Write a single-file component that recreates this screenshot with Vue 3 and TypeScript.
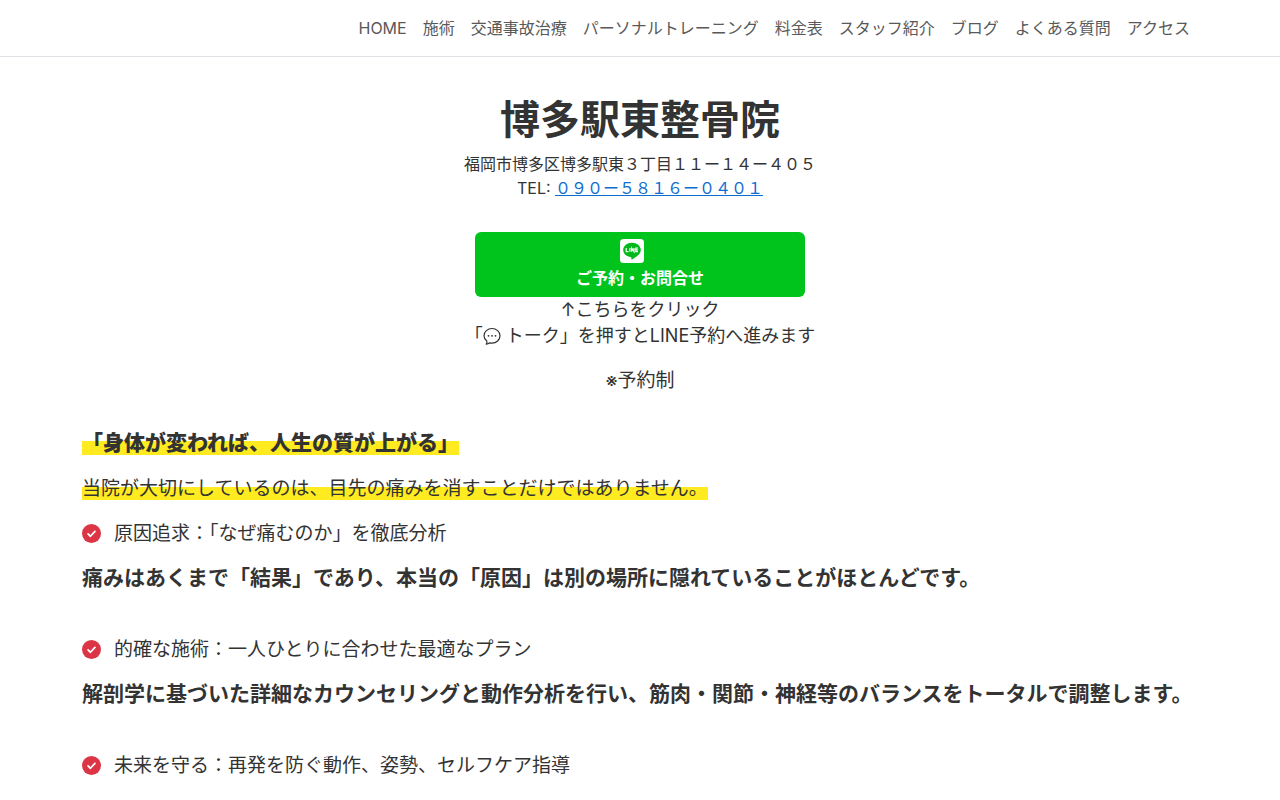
<script setup lang="ts">
interface Point {
  title: string
  detail: string
}

const navItems: string[] = [
  'HOME',
  '施術',
  '交通事故治療',
  'パーソナルトレーニング',
  '料金表',
  'スタッフ紹介',
  'ブログ',
  'よくある質問',
  'アクセス',
]

const points: Point[] = [
  {
    title: '原因追求：「なぜ痛むのか」を徹底分析',
    detail: '痛みはあくまで「結果」であり、本当の「原因」は別の場所に隠れていることがほとんどです。',
  },
  {
    title: '的確な施術：一人ひとりに合わせた最適なプラン',
    detail:
      '解剖学に基づいた詳細なカウンセリングと動作分析を行い、筋肉・関節・神経等のバランスをトータルで調整します。',
  },
  {
    title: '未来を守る：再発を防ぐ動作、姿勢、セルフケア指導',
    detail: '',
  },
]
</script>

<template>
  <div class="page" lang="ja">
    <header class="site-header">
      <nav class="container nav">
        <a v-for="item in navItems" :key="item" href="#" class="nav-link">{{ item }}</a>
      </nav>
    </header>

    <main class="container main">
      <section class="intro">
        <h1 class="title">博多駅東整骨院</h1>
        <p class="contact">
          福岡市博多区博多駅東３丁目１１ー１４ー４０５<br />
          TEL: <a class="tel" href="tel:09058160401">０９０ー５８１６ー０４０１</a>
        </p>
        <a class="line-button" href="#">
          <svg class="line-icon" viewBox="0 0 24 24" aria-hidden="true">
            <rect width="24" height="24" rx="3.5" fill="#fff" />
            <path
              d="M12 3.800c-4.900 0-8.800 3.200-8.800 7.200 0 3.500 3 6.400 7.100 7 1 .2 1.200.7 1 2.100 0 .5.300.6.8.3 3.600-2 8.700-5.200 8.700-9.400 0-4-3.900-7.200-8.800-7.200z"
              fill="#00b81c"
            />
            <path
              d="M6.200 9v3.700h2.200M9.900 9v3.700M11.700 12.700V9l2.300 3.700V9M18.100 9h-2.300v3.700h2.300M15.800 10.850h2.200"
              fill="none"
              stroke="#fff"
              stroke-width="1.200"
            />
          </svg>
          <span>ご予約・お問合せ</span>
        </a>
        <p class="guide">
          ↑こちらをクリック<br />
          「<svg class="talk-icon" viewBox="0 0 18 18" aria-hidden="true">
            <path
              d="M3.800 14C2 12.700 1 10.900 1 8.800 1 4.700 4.600 1.500 9 1.500s8 3.200 8 7.300-3.600 7.300-8 7.300c-.8 0-1.600-.1-2.300-.3-.9.800-2 1.300-3.400 1.400.6-.9.800-2 .5-3.200z"
              fill="none"
              stroke="currentColor"
              stroke-width="1.200"
              stroke-linejoin="round"
            />
            <g fill="currentColor">
              <circle cx="5.500" cy="8.800" r="0.900" />
              <circle cx="9" cy="8.800" r="0.900" />
              <circle cx="12.500" cy="8.800" r="0.900" />
            </g>
          </svg> トーク」を押すとLINE予約へ進みます
        </p>
        <p class="notice">※予約制</p>
      </section>

      <section class="about">
        <p class="lead"><strong class="marker">「身体が変われば、人生の質が上がる」</strong></p>
        <p class="text"><span class="marker">当院が大切にしているのは、目先の痛みを消すことだけではありません。</span></p>
        <template v-for="point in points" :key="point.title">
          <p class="text point">
            <svg class="check" viewBox="0 0 16 16" aria-hidden="true">
              <circle cx="8" cy="8" r="8" fill="#dc3545" />
              <path
                d="M5.100 8.400l2 1.900 3.800-4.100"
                fill="none"
                stroke="#fff"
                stroke-width="1.500"
                stroke-linecap="round"
                stroke-linejoin="round"
              />
            </svg>
            <span>{{ point.title }}</span>
          </p>
          <p v-if="point.detail" class="lead detail">{{ point.detail }}</p>
        </template>
      </section>
    </main>
  </div>
</template>

<style>
body {
  margin: 0;
  background: #fff;
}
</style>

<style scoped>
.page {
  font-family: Inter, 'Noto Sans CJK JP', sans-serif;
  font-size: 16px;
  line-height: 24px;
  color: #333;
}

.container {
  box-sizing: border-box;
  max-width: 1140px;
  margin: 0 auto;
  padding: 0 12px;
}

.site-header {
  border-bottom: 1px solid #dee2e6;
}

.nav {
  display: flex;
  flex-wrap: wrap;
  justify-content: flex-end;
  padding: 16px 20px;
  gap: 16px;
}

.nav-link {
  color: #595959;
  text-decoration: none;
}

.main {
  padding-top: 39px;
}

.intro {
  text-align: center;
}

.title {
  margin: 0 0 8px;
  font-size: 40px;
  line-height: 48px;
  font-weight: 700;
}

.contact {
  margin: 0 0 32px;
}

.tel {
  color: #0d6ed0;
}

.line-button {
  display: flex;
  flex-direction: column;
  align-items: center;
  gap: 3px;
  box-sizing: border-box;
  max-width: 330px;
  margin: 0 auto;
  padding: 7px 12px;
  border-radius: 6px;
  background: #00c41c;
  color: #fff;
  font-weight: 700;
  text-decoration: none;
}

.line-icon {
  width: 24px;
  height: 24px;
  margin-right: 16px;
}

.guide {
  margin: 0 0 17px;
  font-size: 18px;
  line-height: 26px;
}

.talk-icon {
  width: 18px;
  height: 18px;
  vertical-align: -3px;
}

.notice {
  margin: 0 0 32px;
  font-size: 19px;
  line-height: 29px;
}

.text {
  margin: 0 0 16px;
  font-size: 19px;
  line-height: 29px;
}

.lead {
  margin: 0 0 16px;
  font-size: 21px;
  line-height: 31px;
  font-weight: 700;
}

.detail {
  margin-bottom: 42px;
}

.marker {
  background: linear-gradient(transparent 45%, #ffeb1f 45%);
}

.point {
  display: flex;
  align-items: center;
  gap: 13px;
  margin-bottom: 14px;
}

.check {
  flex: none;
  width: 19px;
  height: 19px;
}
</style>
